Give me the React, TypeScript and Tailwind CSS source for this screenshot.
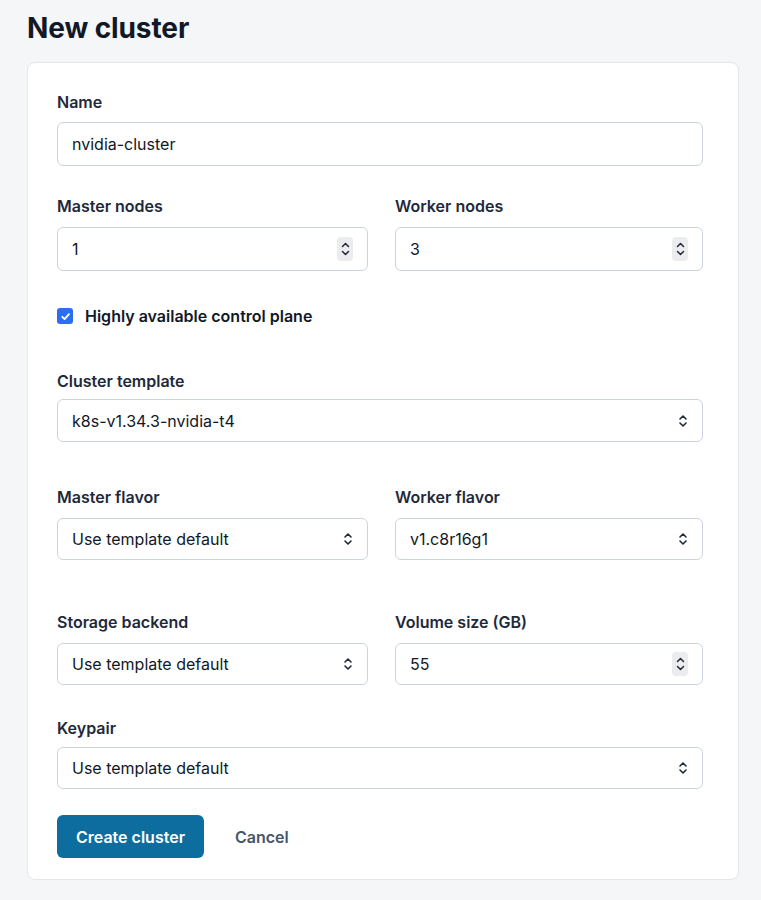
import React from "react";

const font = { fontFamily: "Inter, 'Noto Sans', sans-serif" };

function SelectChevrons() {
  return (
    <svg width="10" height="14" viewBox="0 0 10 14" fill="none" stroke="#1f2937" strokeWidth="1.6" strokeLinecap="round" strokeLinejoin="round">
      <path d="M2 5 L5 2 L8 5" />
      <path d="M2 9 L5 12 L8 9" />
    </svg>
  );
}

function Spinner() {
  return (
    <div className="flex h-[24px] w-[16px] items-center justify-center rounded-[4px] bg-[#ececee]">
      <svg width="9" height="16" viewBox="0 0 9 16" fill="none" stroke="#1f2937" strokeWidth="1.5" strokeLinecap="round" strokeLinejoin="round">
        <path d="M1.5 5.5 L4.5 2.5 L7.5 5.5" />
        <path d="M1.5 10.5 L4.5 13.5 L7.5 10.5" />
      </svg>
    </div>
  );
}

function Label({ children }: { children: React.ReactNode }) {
  return <div className="text-[16px] font-semibold leading-[24px] text-[#1e293b]">{children}</div>;
}

function Field({ value, kind, h = 44 }: { value: string; kind: "text" | "number" | "select"; h?: number }) {
  return (
    <div
      className="flex items-center justify-between rounded-[6px] border border-[#cdd3dc] bg-white pl-[14px] pr-[14px] text-[16px] text-[#111827]"
      style={{ height: h }}
    >
      <span>{value}</span>
      {kind === "number" && <Spinner />}
      {kind === "select" && <SelectChevrons />}
    </div>
  );
}

export default function App() {
  return (
    <div className="min-h-[900px] bg-[#f5f6f8] pl-[27px] pr-[22px] pt-[10px]" style={font}>
      <h1 className="text-[28px] font-bold leading-[36px] tracking-[-0.1px] text-[#111827]">New cluster</h1>
      <div className="mt-[16px] rounded-[8px] border border-[#e3e6eb] bg-white pb-[21px] pl-[29px] pr-[35px] pt-[27px]">
        <Label>Name</Label>
        <div className="mt-[8px]">
          <Field value="nvidia-cluster" kind="text" />
        </div>

        <div className="mt-[28px] grid grid-cols-[311px_1fr] gap-[27px]">
          <div>
            <Label>Master nodes</Label>
            <div className="mt-[9px]">
              <Field value="1" kind="number" />
            </div>
          </div>
          <div>
            <Label>Worker nodes</Label>
            <div className="mt-[9px]">
              <Field value="3" kind="number" />
            </div>
          </div>
        </div>

        <div className="mt-[33px] flex h-[24px] items-center gap-[12px]">
          <div className="flex h-[16px] w-[16px] items-center justify-center rounded-[3px] bg-[#2b6ef2]">
            <svg width="11" height="11" viewBox="0 0 12 12" fill="none" stroke="white" strokeWidth="2" strokeLinecap="round" strokeLinejoin="round">
              <path d="M2.5 6.3 L5 8.8 L9.8 3.5" />
            </svg>
          </div>
          <span className="text-[16px] font-semibold text-[#111827]">Highly available control plane</span>
        </div>

        <div className="mt-[41px]">
          <Label>Cluster template</Label>
          <div className="mt-[6px]">
            <Field value="k8s-v1.34.3-nvidia-t4" kind="select" h={43} />
          </div>
        </div>

        <div className="mt-[43px] grid grid-cols-[311px_1fr] gap-[27px]">
          <div>
            <Label>Master flavor</Label>
            <div className="mt-[9px]">
              <Field value="Use template default" kind="select" h={42} />
            </div>
          </div>
          <div>
            <Label>Worker flavor</Label>
            <div className="mt-[9px]">
              <Field value="v1.c8r16g1" kind="select" h={42} />
            </div>
          </div>
        </div>

        <div className="mt-[50px] grid grid-cols-[311px_1fr] gap-[27px]">
          <div>
            <Label>Storage backend</Label>
            <div className="mt-[9px]">
              <Field value="Use template default" kind="select" h={42} />
            </div>
          </div>
          <div>
            <Label>Volume size (GB)</Label>
            <div className="mt-[9px]">
              <Field value="55" kind="number" h={42} />
            </div>
          </div>
        </div>

        <div className="mt-[31px]">
          <Label>Keypair</Label>
          <div className="mt-[7px]">
            <Field value="Use template default" kind="select" h={42} />
          </div>
        </div>

        <div className="mt-[26px] flex items-center gap-[31px]">
          <button className="h-[43px] rounded-[6px] bg-[#0e6d9f] px-[19px] text-[16px] font-semibold text-white">
            Create cluster
          </button>
          <button className="text-[16px] font-semibold text-[#475569]">Cancel</button>
        </div>
      </div>
    </div>
  );
}
